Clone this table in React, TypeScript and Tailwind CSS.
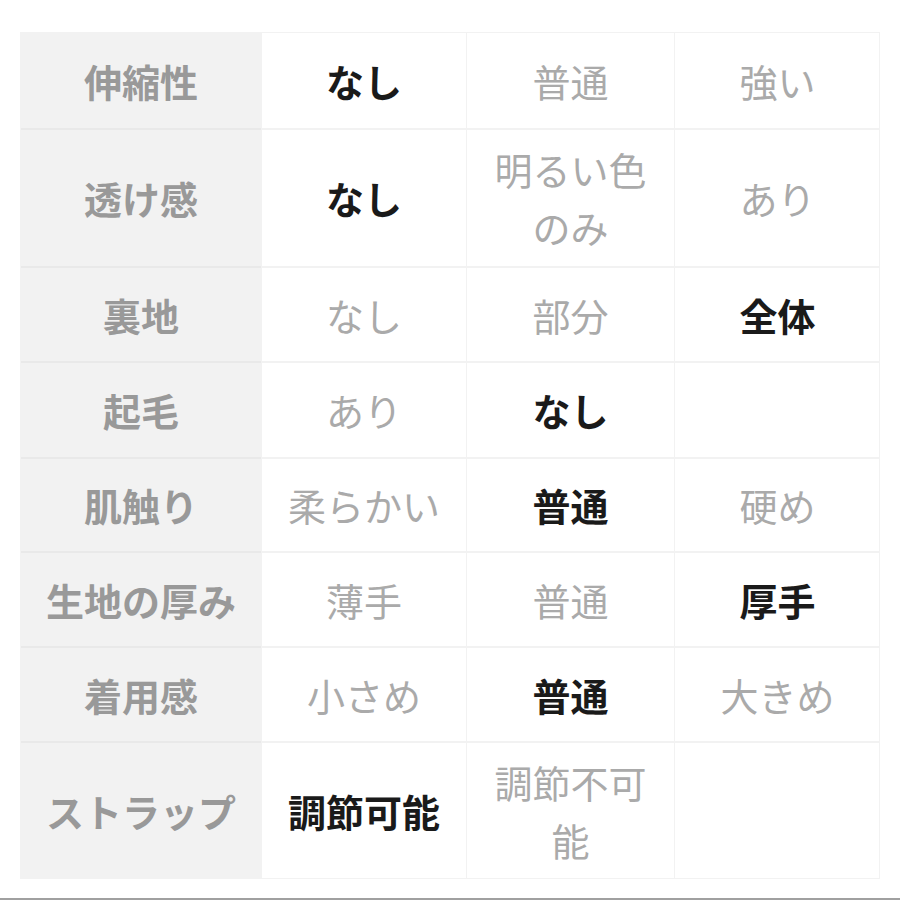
type Cell = { text: string; bold?: boolean };

interface Row {
  label: string;
  height: string;
  cells: Cell[];
}

const rows: Row[] = [
  { label: '伸縮性', height: 'h-[95px]', cells: [{ text: 'なし', bold: true }, { text: '普通' }, { text: '強い' }] },
  {
    label: '透け感',
    height: 'h-[138px]',
    cells: [{ text: 'なし', bold: true }, { text: '明るい色\nのみ' }, { text: 'あり' }],
  },
  { label: '裏地', height: 'h-[95px]', cells: [{ text: 'なし' }, { text: '部分' }, { text: '全体', bold: true }] },
  { label: '起毛', height: 'h-[96px]', cells: [{ text: 'あり' }, { text: 'なし', bold: true }, { text: '' }] },
  { label: '肌触り', height: 'h-[94px]', cells: [{ text: '柔らかい' }, { text: '普通', bold: true }, { text: '硬め' }] },
  { label: '生地の厚み', height: 'h-[95px]', cells: [{ text: '薄手' }, { text: '普通' }, { text: '厚手', bold: true }] },
  { label: '着用感', height: 'h-[95px]', cells: [{ text: '小さめ' }, { text: '普通', bold: true }, { text: '大きめ' }] },
  {
    label: 'ストラップ',
    height: 'h-[137px]',
    cells: [{ text: '調節可能', bold: true }, { text: '調節不可\n能' }, { text: '' }],
  },
];

export default function App() {
  return (
    <div
      className="w-[900px] h-[900px] bg-white relative"
      style={{ fontFamily: '"Noto Sans CJK JP", "Noto Sans", sans-serif' }}
    >
      <div className="pt-[32px] px-[20px]">
        <div className="grid grid-cols-[240px_205px_208px_206px] border border-[#f2f2f2]">
          {rows.map((row, i) => (
            <div key={i} className="contents">
              <div
                className={`${row.height} bg-[#f2f2f2] flex items-center justify-center text-[38px] leading-[58px] font-bold text-[#999] ${i === 0 ? '' : 'border-t-2 border-[#e9e9e9]'}`}
              >
                {row.label}
              </div>
              {row.cells.map((c, j) => (
                <div
                  key={j}
                  className={`${row.height} flex items-center justify-center text-center whitespace-pre-line text-[38px] leading-[58px] border-l border-[#f2f2f2] ${i === 0 ? '' : 'border-t-2'} ${
                    c.bold ? 'font-bold text-[#1a1a1a]' : 'font-normal text-[#aaa]'
                  }`}
                >
                  {c.text}
                </div>
              ))}
            </div>
          ))}
        </div>
      </div>
      <div className="absolute left-0 right-0 bottom-0 h-[2px] bg-[#a0a0a0]" />
    </div>
  );
}
